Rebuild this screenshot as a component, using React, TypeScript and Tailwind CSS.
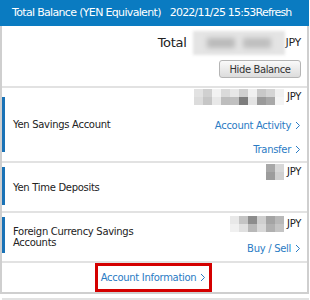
import React from "react";

const font = { fontFamily: '"DejaVu Sans", Verdana, sans-serif' };

function Chev() {
  return (
    <svg width="6" height="9" viewBox="0 0 6 9" className="ml-[4px] inline-block">
      <polyline points="1,1 4.5,4.5 1,8" fill="none" stroke="#2a7bc4" strokeWidth="1" />
    </svg>
  );
}

function Mosaic({ cols, rows }: { cols: string[]; rows: number }) {
  return (
    <div className="flex flex-col">
      {Array.from({ length: rows }).map((_, r) => (
        <div key={r} className="flex">
          {cols.map((c, i) => (
            <div
              key={i}
              className="w-[9px] h-[8px]"
              style={{ backgroundColor: c.split("|")[r] ?? c.split("|")[0] }}
            />
          ))}
        </div>
      ))}
    </div>
  );
}

function Bar({ top, bottom }: { top: number; bottom: number }) {
  return (
    <div className="w-[3px] bg-[#1a72b6] shrink-0" style={{ marginTop: top, marginBottom: bottom }} />
  );
}

export default function App() {
  return (
    <div className="w-[310px] h-[300px] bg-white" style={font}>
      <div className="w-[309px]">
        <div className="h-[26px] bg-[#0a7bc1] flex items-center text-white text-[11px] tracking-[-0.67px] pl-[12px]">
          <span>Total Balance (YEN Equivalent)</span>
          <span className="ml-[9px] tracking-[-0.8px]">2022/11/25 15:53Refresh</span>
        </div>
        <div className="border-l-2 border-r-2 border-b-2 border-[#cfcfcf] text-[#222] text-[10px] tracking-[-0.3px]">
          {/* total */}
          <div className="h-[60px] flex flex-col items-end pr-[6px]">
            <div className="flex items-center mt-[5px] h-[24px]">
              <span className="text-[13px] tracking-[-0.3px] mr-[6px]">Total</span>
              <div className="w-[92px] h-[24px] bg-[#e4e4e4] blur-[1.5px] flex items-center justify-around px-[10px]">
                <div className="w-[28px] h-[10px] bg-[#b9b9b9] blur-[2px]" />
                <div className="w-[28px] h-[10px] bg-[#bdbdbd] blur-[2px]" />
              </div>
              <span className="text-[11px] ml-[1px]">JPY</span>
            </div>
            <button className="mt-[5px] w-[82px] h-[18px] rounded-[3px] border border-[#b5b5b5] bg-gradient-to-b from-[#fafafa] to-[#dcdcdc] text-[10px] text-[#333] tracking-[-0.4px]" style={font}>
              Hide Balance
            </button>
          </div>
          <div className="h-[2px] bg-[#e2e2e2]" />
          {/* savings */}
          <div className="h-[73px] flex">
            <Bar top={9} bottom={9} />
            <div className="flex-1 flex items-center pl-[8px]">Yen Savings Account</div>
            <div className="flex flex-col items-end pr-[6px] pt-[0px]">
              <div className="flex items-center h-[17px]">
                <Mosaic rows={2} cols={["#e2e2e2|#dcdcdc", "#d0d0d0|#c6c6c6", "#f2f2f2|#e8e8e8", "#dadada|#bdbdbd", "#e8e8e8|#c0c0c0", "#cfcfcf|#7d7d7d", "#f0f0f0|#e4e4e4", "#c8c8c8|#9a9a9a", "#d4d4d4|#a8a8a8", "#f0f0f0|#f4f4f4"]} />
                <span className="ml-[3px]">JPY</span>
              </div>
              <div className="h-[14px] mt-[13px] flex items-center text-[#2a7bc4]">Account Activity<Chev /></div>
              <div className="h-[14px] mt-[10px] flex items-center text-[#2a7bc4]">Transfer<Chev /></div>
            </div>
          </div>
          <div className="h-[2px] bg-[#e2e2e2]" />
          {/* time deposits */}
          <div className="h-[48px] flex">
            <Bar top={4} bottom={6} />
            <div className="flex-1 flex items-center pl-[8px]">Yen Time Deposits</div>
            <div className="flex flex-col items-end pr-[6px] pt-[0px]">
              <div className="flex items-center h-[17px]">
                <Mosaic rows={2} cols={["#a8a8a8|#9c9c9c", "#d8d8d8|#d0d0d0"]} />
                <span className="ml-[3px]">JPY</span>
              </div>
            </div>
          </div>
          <div className="h-[2px] bg-[#e2e2e2]" />
          {/* foreign */}
          <div className="h-[48px] flex">
            <Bar top={4} bottom={8} />
            <div className="flex-1 flex items-center pl-[8px] leading-[11px]">
              Foreign Currency Savings<br />Accounts
            </div>
            <div className="flex flex-col items-end pr-[6px] pt-[2px]">
              <div className="flex items-center h-[17px]">
                <Mosaic rows={2} cols={["#e8e8e8|#f0f0f0", "#c4c4c4|#e0e0e0", "#8c8c8c|#b8b8b8", "#cfcfcf|#d8d8d8", "#a4a4a4|#b0b0b0", "#b8b8b8|#c4c4c4"]} />
                <span className="ml-[3px]">JPY</span>
              </div>
              <div className="h-[14px] mt-[9px] flex items-center text-[#2a7bc4]">Buy / Sell<Chev /></div>
            </div>
          </div>
          <div className="h-[2px] bg-[#e2e2e2]" />
          {/* account info */}
          <div className="h-[29px] flex justify-center">
            <div className="w-[117px] h-[29px] border-[3px] border-[#d40000] flex items-center justify-center text-[#2a7bc4] mr-[2px]">
              Account Information<Chev />
            </div>
          </div>
        </div>
        <div className="mt-[4px] h-[2px] bg-[#e2e2e2] ml-[2px]" />
      </div>
    </div>
  );
}
